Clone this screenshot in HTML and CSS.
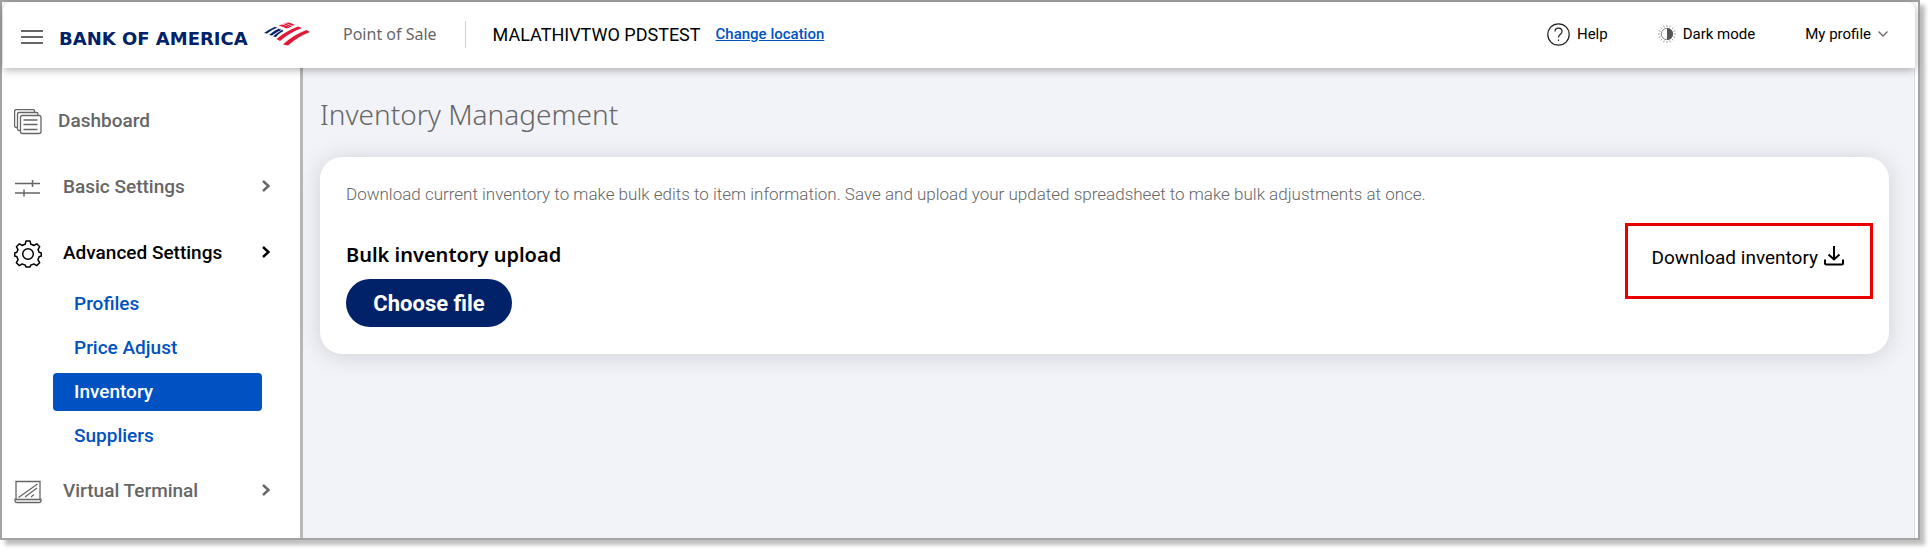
FILE: index.html
```html
<!DOCTYPE html>
<html lang="en">
<head>
    <meta charset="UTF-8">
    <meta name="viewport" content="width=device-width, initial-scale=1.0">
    <title>Inventory Management</title>
    <link rel="stylesheet" href="styles.css">
</head>
<body>
    <div class="window">
        <header class="topbar">
            <button type="button" class="menu-button" aria-label="Menu">
                <svg width="22" height="14" viewBox="0 0 22 14" fill="none" stroke="#666" stroke-width="2"><path d="M0 1h22M0 7h22M0 13h22"/></svg>
            </button>
            <a href="#" class="brand">
                <span>BANK OF AMERICA</span>
                <svg width="48" height="26" viewBox="0 0 48 26">
                    <g fill="#012169">
                        <path d="M1 12Q7 8 11.500 6L14.500 6.500Q8 9 4 12.500Z"/>
                        <path d="M6 14Q11 9.500 16 7.500L14 6.800L18.500 9Q13 11 9 14.600Z"/>
                        <path d="M10 15.500Q15 11 19 9L17 8L19.500 9Q20.500 9.500 20 10.200Q16 12 13 16Z"/>
                    </g>
                    <g fill="#e31837">
                        <path d="M15.500 4.500L19 3.500Q23 4 27 6.500L23.500 7.500Q20 5.500 15.500 4.500Z"/>
                        <path d="M22 2L25.500 1.500Q29 2 32 4L29 4.800Q26 3 22 2Z"/>
                        <path d="M20 3L22 2.500Q26 3.500 29 5.500L27 6.300Q23 4 20 3Z"/>
                        <path d="M13.500 18Q23 10 35 5.500L39 7Q27 11.500 17 20Z"/>
                        <path d="M20 23.500Q29 14.500 43.500 9L47 11Q35 15.500 25 24.500Z"/>
                    </g>
                </svg>
            </a>
            <span class="product">Point of Sale</span>
            <span class="merchant">MALATHIVTWO PDSTEST</span>
            <a href="#" class="change-location">Change location</a>
            <div class="tools">
                <button type="button" class="tool">
                    <svg width="23" height="23" viewBox="0 0 23 23" fill="none" stroke="#222" stroke-width="1.2"><circle cx="11.500" cy="11.500" r="10.700"/><path d="M8 8.500c0-4.500 7-4.500 7 0 0 3-3.500 2.500-3.500 6M11.500 16.500v1.500"/></svg>
                    Help
                </button>
                <button type="button" class="tool">
                    <svg width="18" height="18" viewBox="0 0 18 18" fill="none" stroke="#888"><circle cx="9" cy="9" r="5.700"/><path d="M9 3a6 6 0 0 1 0 12z" fill="#555" stroke="none"/><path d="M9 0v2M9 16v2M0 9h2M16 9h2M2.600 2.600l1.500 1.500M13.900 13.900l1.500 1.500M15.400 2.600l-1.500 1.500M4.100 13.900l-1.500 1.500M5.600.7l.7 1.800M12.400.7l-.7 1.800M5.600 17.300l.7-1.800M12.400 17.300l-.7-1.800M.7 5.600l1.800.7M17.300 5.600l-1.800.7M.7 12.400l1.800-.7M17.300 12.400l-1.800-.7" stroke-width=".8"/></svg>
                    Dark mode
                </button>
                <button type="button" class="tool">
                    My profile
                    <svg width="10" height="6" viewBox="0 0 10 6" fill="none" stroke="#666" stroke-width="1.300"><path d="M.5.500L5 5L9.500.500"/></svg>
                </button>
            </div>
        </header>
        <div class="layout">
            <nav class="sidebar">
                <a href="#" class="nav-item dashboard">
                    <svg class="icon" width="28" height="26" viewBox="0 0 28 26" fill="none" stroke="#666" stroke-width="1.300"><rect x="6.500" y="6.500" width="20.500" height="18" rx="2"/><path d="M6 21.500H5a1.500 1.500 0 0 1-1.500-1.500V5A1.500 1.500 0 0 1 5 3.500h17.500A1.500 1.500 0 0 1 24 5v1M3 18.500H2A1.500 1.500 0 0 1 .6 17V2A1.500 1.500 0 0 1 2 .600h17A1.500 1.500 0 0 1 20.500 2v1M9.500 11h14M9.500 15.500h14M9.500 20.500h14"/></svg>
                    <span>Dashboard</span>
                </a>
                <a href="#" class="nav-item">
                    <svg class="icon" width="28" height="18" viewBox="0 0 28 18" fill="none" stroke="#666" stroke-width="1.500"><path d="M1 4.500h25M18.500 1v7M1 14h25M10 10.500v7"/></svg>
                    <span>Basic Settings</span>
                    <svg class="arrow" width="8" height="12" viewBox="0 0 8 12" fill="none" stroke="currentColor" stroke-width="2.400"><path d="M1 1L6.500 6L1 11"/></svg>
                </a>
                <a href="#" class="nav-item open">
                    <svg class="icon" width="28" height="28" viewBox="0 0 28 28" fill="none" stroke="#000" stroke-width="1.500" stroke-linejoin="round"><circle cx="14" cy="14" r="5.300"/><path d="M12 1h4l.8 3.300q1.700.4 3 1.200l3-1.700 2.900 2.900-1.700 3q.8 1.400 1.100 2.600l2.200.7v3l-2.200.8q-.4 1.500-1.200 2.900l1.700 3-2.900 2.900-3-1.700q-1.300.8-2.900 1.200L16 27h-4l-.8-1.900q-1.600-.4-2.900-1.200l-3 1.700-2.900-2.900 1.700-3q-.8-1.400-1.200-2.900L.7 16v-3l2.200-.7q.3-1.200 1.100-2.600l-1.600-3 2.900-2.900 3 1.700q1.300-.8 2.900-1.200z"/></svg>
                    <span>Advanced Settings</span>
                    <svg class="arrow" width="8" height="12" viewBox="0 0 8 12" fill="none" stroke="currentColor" stroke-width="2.400"><path d="M1 1L6.500 6L1 11"/></svg>
                </a>
                <div class="submenu">
                    <a href="#">Profiles</a>
                    <a href="#">Price Adjust</a>
                    <a href="#" class="active">Inventory</a>
                    <a href="#">Suppliers</a>
                </div>
                <a href="#" class="nav-item">
                    <svg class="icon" width="28" height="24" viewBox="0 0 28 24" fill="none" stroke="#666" stroke-width="1.300"><path d="M2 19V1.500h24V19M1 19.500h26v1q0 2-2 2H3q-2 0-2-2zM4.500 17.500L23.500 4M11 17L23 8M17 17l3-2.500"/></svg>
                    <span>Virtual Terminal</span>
                    <svg class="arrow" width="8" height="12" viewBox="0 0 8 12" fill="none" stroke="currentColor" stroke-width="2.400"><path d="M1 1L6.500 6L1 11"/></svg>
                </a>
            </nav>
            <main class="content">
                <h1>Inventory Management</h1>
                <section class="card">
                    <p class="description">Download current inventory to make bulk edits to item information. Save and upload your updated spreadsheet to make bulk adjustments at once.</p>
                    <div class="card-row">
                        <div class="upload">
                            <h2>Bulk inventory upload</h2>
                            <button type="button" class="choose-file">Choose file</button>
                        </div>
                        <div class="highlight">
                            <button type="button" class="download">
                                Download inventory
                                <svg width="20" height="20" viewBox="0 0 20 20" fill="none" stroke="#000" stroke-width="2"><path d="M10 0v13M4.500 8.500L10 13.500L15.500 8.500M1 13.500V17q0 1.500 1.500 1.500h15q1.500 0 1.500-1.500v-3.500"/></svg>
                            </button>
                        </div>
                    </div>
                </section>
            </main>
        </div>
    </div>
</body>
</html>
```
FILE: styles.css
```css
* {
    box-sizing: border-box;
}

body {
    margin: 0;
    padding: 0 12px 12px 0;
    font-family: Roboto, sans-serif;
    color: #000;
    background-color: #fff;
}

button {
    font-family: inherit;
    color: inherit;
    background: none;
    border: none;
    padding: 0;
    cursor: pointer;
}

svg {
    flex-shrink: 0;
}

.window {
    display: flex;
    flex-direction: column;
    min-height: calc(100vh - 12px);
    padding: 0 3px 0 1px;
    border: 2px solid #a3a3a3;
    box-shadow: 5px 5px 4px rgba(0, 0, 0, 0.25);
}

.topbar {
    position: relative;
    display: flex;
    align-items: center;
    height: 66px;
    padding: 0 27px 2px 18px;
    background-color: #fff;
    border-radius: 8px 8px 0 0;
    box-shadow: 0 2px 8px rgba(0, 0, 0, 0.3);
}

.menu-button {
    display: flex;
    margin-right: 16px;
    padding-top: 6px;
}

.brand {
    display: flex;
    align-items: center;
    justify-content: space-between;
    width: 252px;
    color: #012169;
    font-family: "DejaVu Sans", sans-serif;
    font-size: 18px;
    font-weight: 700;
    text-decoration: none;
    white-space: nowrap;
}

.brand span {
    padding-top: 8px;
}

.product {
    margin-left: 32px;
    padding-right: 28px;
    border-right: 1px solid #d0d0d0;
    color: #666;
    font-family: "Noto Sans", sans-serif;
    font-size: 16px;
    line-height: 27px;
}

.merchant {
    margin-left: 27px;
    font-size: 18px;
}

.change-location {
    margin-left: 15px;
    color: #0052c2;
    font-size: 15px;
    font-weight: 500;
}

.tools {
    display: flex;
    gap: 50px;
    margin-left: auto;
}

.tool {
    display: flex;
    align-items: center;
    gap: 7px;
    font-size: 15px;
}

.layout {
    display: flex;
    flex: 1;
    border-right: 1px solid #ddd;
}

.sidebar {
    width: 300px;
    padding-top: 19px;
    border-right: 3px solid #b7b7b7;
    background-color: #fff;
}

.nav-item {
    display: flex;
    align-items: center;
    height: 66px;
    padding: 0 30px 0 11px;
    color: #666;
    font-size: 19px;
    font-weight: 500;
    text-decoration: none;
}

.nav-item span {
    margin-left: 21px;
}

.dashboard span {
    margin-left: 16px;
}

.icon {
    margin-top: 4px;
}

.open {
    color: #000;
}

.arrow {
    margin-left: auto;
}

.submenu {
    display: flex;
    flex-direction: column;
    gap: 6px;
    padding: 0 38px 2px 50px;
}

.submenu a {
    padding-left: 21px;
    border-radius: 4px;
    color: #0052c2;
    font-size: 19px;
    font-weight: 500;
    line-height: 38px;
    text-decoration: none;
}

.submenu .active {
    background-color: #0052c2;
    color: #fff;
}

.content {
    flex: 1;
    padding: 24px 25px 24px 17px;
    background-color: #f2f3f8;
}

h1 {
    margin: 0 0 21px;
    color: #666;
    font-family: "Noto Sans", sans-serif;
    font-size: 28px;
    font-weight: 300;
    line-height: 44px;
}

.card {
    padding: 25px 16px 27px 26px;
    border-radius: 22px;
    background-color: #fff;
    box-shadow: 0 2px 24px rgba(0, 0, 0, 0.14);
}

.description {
    margin: 0 0 17px;
    color: #666;
    font-size: 17px;
    font-weight: 300;
    line-height: 24px;
}

.card-row {
    display: flex;
    justify-content: space-between;
    align-items: flex-start;
}

h2 {
    margin: 16px 0 8px;
    font-family: "Noto Sans", sans-serif;
    font-size: 20px;
    font-weight: 600;
    line-height: 32px;
}

.choose-file {
    width: 166px;
    height: 48px;
    border-radius: 24px;
    background-color: #012169;
    color: #fff;
    font-size: 22px;
    font-weight: 700;
}

.highlight {
    height: 76px;
    padding: 20px 26px 0 23px;
    border: 3px solid #e80000;
}

.download {
    display: flex;
    align-items: flex-start;
    gap: 6px;
    font-size: 19px;
    line-height: 24px;
}
```
